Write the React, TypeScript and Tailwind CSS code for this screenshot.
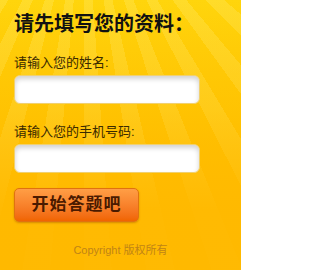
export default function App() {
    return (
        <div
            className="w-[241px] h-[270px] overflow-hidden flex flex-col pl-[14px] pt-[12px] bg-[image:linear-gradient(to_bottom,transparent_0%,rgba(255,185,0,0.3)_40%,rgba(255,185,0,0.95)_78%),repeating-conic-gradient(from_140deg_at_35%_-45%,rgba(255,236,110,0.3)_0deg_4deg,transparent_4deg_9deg),linear-gradient(to_bottom,#ffd50c,#ffc300_55%,#ffb900)]"
            style={{ fontFamily: '"Liberation Sans", "Noto Sans CJK SC", sans-serif' }}
        >
            {/* 标题 */}
            <h1 className="text-[20px] leading-[24px] font-bold text-[#111]">请先填写您的资料：</h1>

            <label className="mt-[19px] text-[13px] leading-[16px] text-[#3b2a00]">请输入您的姓名:</label>
            <input
                type="text"
                className="mt-[4px] w-[186px] h-[29px] rounded-[6px] bg-white border border-[#f0d070] shadow-[inset_0_3px_5px_rgba(0,0,0,0.18)] outline-none"
            />

            <label className="mt-[20px] text-[13px] leading-[16px] text-[#3b2a00]">请输入您的手机号码:</label>
            <input
                type="text"
                className="mt-[4px] w-[186px] h-[29px] rounded-[6px] bg-white border border-[#f0d070] shadow-[inset_0_3px_5px_rgba(0,0,0,0.18)] outline-none"
            />

            {/* 按钮 */}
            <button
                className="mt-[15px] w-[125px] h-[34px] rounded-[5px] border border-[#e0720f] bg-gradient-to-b from-[#ff9e45] to-[#f06400] shadow-[0_1px_2px_rgba(150,70,0,0.4)] text-[17px] font-bold tracking-[1px] text-[#4a1a00]"
                style={{ fontFamily: '"Liberation Serif", "Noto Sans CJK SC", serif' }}
            >
                开始答题吧
            </button>

            <p className="mt-[21px] w-[227px] pr-[14px] text-center text-[11px] leading-[14px] text-[#bf8416]">Copyright 版权所有</p>
        </div>
    );
}
